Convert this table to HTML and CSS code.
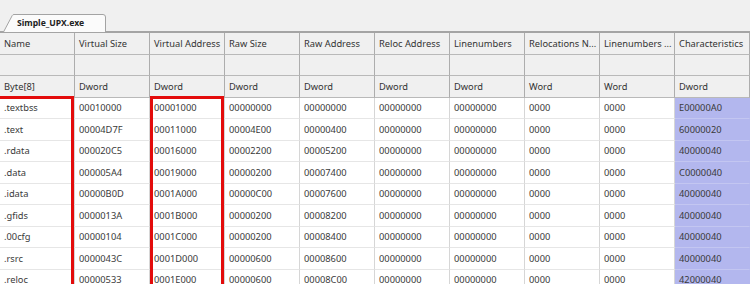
FILE: index.html
```html
<!DOCTYPE html>
<html>
<head>
<meta charset="utf-8">
<link rel="stylesheet" href="styles.css">
</head>
<body>
<div class="tabstrip">
  <div class="tab">
    <svg class="tab-shape" width="104" height="18" viewBox="0 0 104 18"><path d="M0.5 18 L9.2 1.6 Q9.8 0.5 11 0.5 L100 0.5 Q102.5 0.5 102.5 3 L102.5 18" fill="#fbfbfb" stroke="#a3a3a3" stroke-width="1"/></svg>
    <span class="tab-label">Simple_UPX.exe</span>
  </div>
</div>
<div class="sheet">
<div class="grid">
  <div class="h">Name</div><div class="h">Virtual Size</div><div class="h">Virtual Address</div><div class="h">Raw Size</div><div class="h">Raw Address</div><div class="h">Reloc Address</div><div class="h">Linenumbers</div><div class="h">Relocations N...</div><div class="h">Linenumbers ...</div><div class="h last">Characteristics</div>
  <div class="h"></div><div class="h"></div><div class="h"></div><div class="h"></div><div class="h"></div><div class="h"></div><div class="h"></div><div class="h"></div><div class="h"></div><div class="h last"></div>
  <div class="h">Byte[8]</div><div class="h">Dword</div><div class="h">Dword</div><div class="h">Dword</div><div class="h">Dword</div><div class="h">Dword</div><div class="h">Dword</div><div class="h">Word</div><div class="h">Word</div><div class="h last">Dword</div>

  <div class="d">.textbss</div><div class="d">00010000</div><div class="d">00001000</div><div class="d">00000000</div><div class="d">00000000</div><div class="d">00000000</div><div class="d">00000000</div><div class="d">0000</div><div class="d">0000</div><div class="d sel">E00000A0</div>
  <div class="d">.text</div><div class="d">00004D7F</div><div class="d">00011000</div><div class="d">00004E00</div><div class="d">00000400</div><div class="d">00000000</div><div class="d">00000000</div><div class="d">0000</div><div class="d">0000</div><div class="d sel">60000020</div>
  <div class="d">.rdata</div><div class="d">000020C5</div><div class="d">00016000</div><div class="d">00002200</div><div class="d">00005200</div><div class="d">00000000</div><div class="d">00000000</div><div class="d">0000</div><div class="d">0000</div><div class="d sel">40000040</div>
  <div class="d">.data</div><div class="d">000005A4</div><div class="d">00019000</div><div class="d">00000200</div><div class="d">00007400</div><div class="d">00000000</div><div class="d">00000000</div><div class="d">0000</div><div class="d">0000</div><div class="d sel">C0000040</div>
  <div class="d">.idata</div><div class="d">00000B0D</div><div class="d">0001A000</div><div class="d">00000C00</div><div class="d">00007600</div><div class="d">00000000</div><div class="d">00000000</div><div class="d">0000</div><div class="d">0000</div><div class="d sel">40000040</div>
  <div class="d">.gfids</div><div class="d">0000013A</div><div class="d">0001B000</div><div class="d">00000200</div><div class="d">00008200</div><div class="d">00000000</div><div class="d">00000000</div><div class="d">0000</div><div class="d">0000</div><div class="d sel">40000040</div>
  <div class="d">.00cfg</div><div class="d">00000104</div><div class="d">0001C000</div><div class="d">00000200</div><div class="d">00008400</div><div class="d">00000000</div><div class="d">00000000</div><div class="d">0000</div><div class="d">0000</div><div class="d sel">40000040</div>
  <div class="d">.rsrc</div><div class="d">0000043C</div><div class="d">0001D000</div><div class="d">00000600</div><div class="d">00008600</div><div class="d">00000000</div><div class="d">00000000</div><div class="d">0000</div><div class="d">0000</div><div class="d sel">40000040</div>
  <div class="d">.reloc</div><div class="d">00000533</div><div class="d">0001E000</div><div class="d">00000600</div><div class="d">00008C00</div><div class="d">00000000</div><div class="d">00000000</div><div class="d">0000</div><div class="d">0000</div><div class="d sel">42000040</div>
</div>
<div class="marks">
  <div class="mark mark-name"></div>
  <div class="mark mark-va"></div>
</div>
</div>
</body>
</html>
```

FILE: styles.css
```css
html, body {
  margin: 0;
  padding: 0;
}
body {
  width: 750px;
  height: 284px;
  overflow: hidden;
  background: #f0f0f0;
  font-family: "Noto Sans", "Open Sans", sans-serif;
  font-size: 9.3px;
  color: #3a3a3a;
}
.tabstrip {
  height: 31px;
  display: flex;
  align-items: flex-end;
  padding-left: 3px;
  box-sizing: border-box;
}
.tab {
  position: relative;
  width: 104px;
  height: 17px;
  display: flex;
  align-items: center;
  padding-left: 14px;
  box-sizing: border-box;
}
.tab-shape {
  position: absolute;
  left: 0;
  top: 0;
}
.tab-label {
  position: relative;
  font-weight: bold;
  font-size: 8.6px;
  color: #222;
}
.sheet {
  display: grid;
  height: 253px;
  overflow: hidden;
}
.grid, .marks {
  grid-area: 1 / 1;
}
.grid {
  border-top: 2px solid #a4a4a4;
  display: grid;
  grid-template-columns: repeat(10, 75px);
  grid-auto-rows: 21.5px;
  background: #fff;
}
.h, .d {
  box-sizing: border-box;
  display: flex;
  align-items: center;
  padding-left: 4px;
  white-space: nowrap;
  overflow: hidden;
}
.h {
  background: #f0f0f0;
  border-right: 1px solid #adadad;
  border-bottom: 1px solid #b9b9b9;
  color: #333;
}
.d {
  background: #fff;
  border-right: 1px solid #d6d6d6;
  border-bottom: 1px solid #e6e6e6;
}
.d.sel {
  background: #b3b7ee;
  border-bottom-color: #c3c6f1;
  border-right-color: #b3b7ee;
}
.marks {
  display: grid;
  grid-template-columns: repeat(10, 75px);
  grid-template-rows: 200px;
  padding-top: 65px;
  pointer-events: none;
}
.mark {
  border: 3px solid #e30b0b;
  border-bottom: none;
  box-sizing: border-box;
}
.mark-name {
  grid-column: 1;
  border-left: none;
  margin-right: 1px;
}
.mark-va {
  grid-column: 3;
  margin-right: 1px;
}
```
